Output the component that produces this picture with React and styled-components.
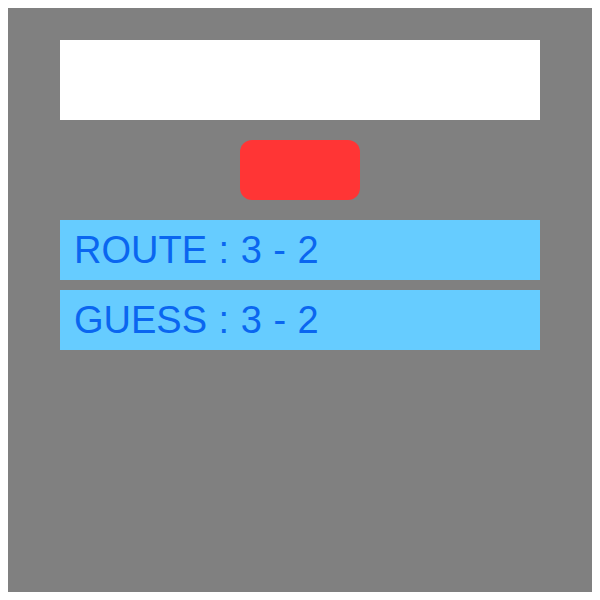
import React from 'react';
import styled, { createGlobalStyle } from 'styled-components';

const GlobalStyle = createGlobalStyle`
    body {
        margin: 8px;
        background: #ffffff;
        font-family: "Liberation Sans", Arial, sans-serif;
    }
`;

const Board = styled.div`
    width: 584px;
    height: 584px;
    box-sizing: border-box;
    background: #808080;
    box-shadow: 0 0 0 1px #c4c4c4;
    padding: 32px 52px;
    display: flex;
    flex-direction: column;
    align-items: center;
`;

const Screen = styled.div`
    width: 100%;
    height: 80px;
    background: #ffffff;
`;

const GoButton = styled.button`
    width: 120px;
    height: 60px;
    margin: 20px 0;
    border: none;
    border-radius: 12px;
    background: #ff3535;
    padding: 0;
`;

const Rows = styled.div`
    width: 100%;
    display: flex;
    flex-direction: column;
    gap: 10px;
`;

const InfoRow = styled.div`
    height: 60px;
    background: #66ccff;
    color: #0a66f0;
    font-size: 38px;
    word-spacing: 1px;
    display: flex;
    align-items: center;
    padding-left: 14px;
    padding-top: 1px;
    box-sizing: border-box;
`;

const App = () => (
  <>
    <GlobalStyle />
    <Board>
      <Screen />
      <GoButton />
      <Rows>
        <InfoRow>ROUTE : 3 - 2</InfoRow>
        <InfoRow>GUESS : 3 - 2</InfoRow>
      </Rows>
    </Board>
  </>
);

export default App;
